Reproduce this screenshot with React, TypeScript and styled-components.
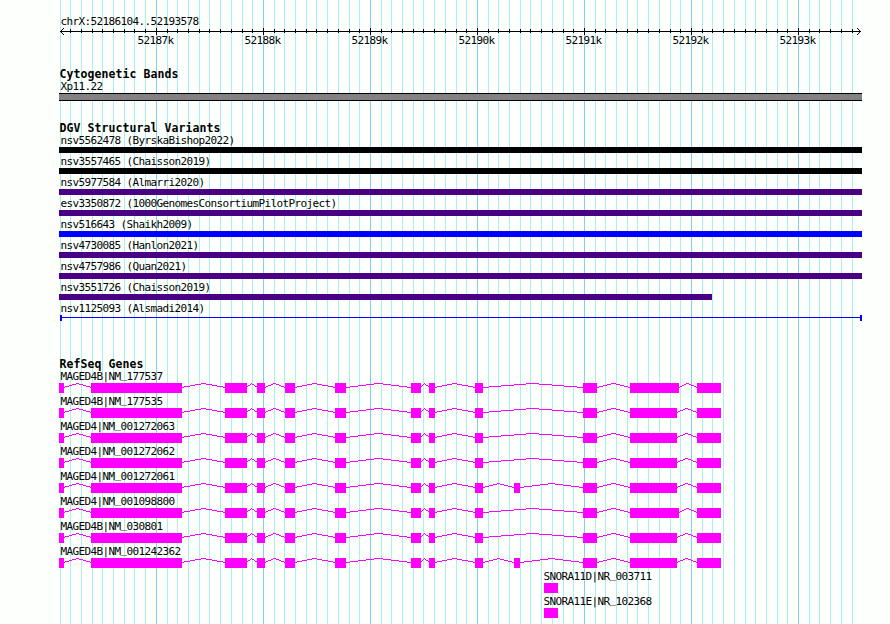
import React from 'react';
import styled, { createGlobalStyle } from 'styled-components';

const START = 52186104;
const END = 52193578;
const LEFT = 60;
const WIDTH = 800;

const toX = (bp: number) => Math.round(LEFT + ((bp - START) * WIDTH) / (END - START + 1));

const GlobalStyle = createGlobalStyle`
  body {
    margin: 0;
    background-color: #fdfffc;
  }
`;

const Browser = styled.main`
  position: relative;
  box-sizing: border-box;
  display: flex;
  flex-direction: column;
  width: 890px;
  height: 624px;
  padding-top: 15px;
  overflow: hidden;
  color: #000;
  font-family: 'DejaVu Sans Mono', monospace;
  font-size: 11px;
  line-height: 13px;
  letter-spacing: -0.622px;
`;

const Backdrop = styled.svg`
  position: absolute;
  top: 0;
  left: 0;
  z-index: -1;
`;

const Ruler = styled.header`
  display: flex;
  flex-direction: column;
  height: 53px;
`;

const Scale = styled.svg`
  display: block;
  flex: none;
`;

const Track = styled.section<{ $gap: number }>`
  display: flex;
  flex-direction: column;
  margin-bottom: ${({ $gap }) => $gap}px;
`;

const TrackTitle = styled.h2`
  height: 12px;
  margin: 0;
  padding-left: 59.5px;
  font-size: 11.5px;
  font-weight: bold;
  line-height: 13px;
  letter-spacing: 0.077px;
`;

const Label = styled.div<{ $x?: number }>`
  height: 13px;
  padding-left: ${({ $x = LEFT }) => $x + 0.5}px;
  white-space: pre;
`;

const Underscore = styled.span`
  position: relative;
  top: -2px;
`;

const Band = styled.div`
  box-sizing: border-box;
  width: 803px;
  height: 8px;
  margin-left: 59px;
  border: solid #000;
  border-width: 1px 0;
  background-color: #848184;
`;

const Feature = styled.div`
  height: 19px;
  margin-bottom: 2px;
`;

const VariantBar = styled.div<{ $color: string; $end: number }>`
  width: ${({ $end }) => $end - 59}px;
  height: 6px;
  margin-left: 59px;
  background-color: ${({ $color }) => $color};
`;

const VariantSpan = styled.div`
  display: flex;
  align-items: center;
  box-sizing: border-box;
  width: 802px;
  height: 6px;
  margin-left: 60px;
  border: solid #0000ff;
  border-width: 0 2px;

  &::before {
    content: '';
    flex: 1;
    height: 1px;
    margin-bottom: 1px;
    background-color: #0000ff;
  }
`;

const Gene = styled.div`
  height: 23px;
  margin-bottom: 2px;
`;

const GeneModel = styled.svg`
  display: block;
`;

const variants = [
  { name: 'nsv5562478 (ByrskaBishop2022)', color: '#000004', end: 862 },
  { name: 'nsv3557465 (Chaisson2019)', color: '#000000', end: 862 },
  { name: 'nsv5977584 (Almarri2020)', color: '#4a0084', end: 862 },
  { name: 'esv3350872 (1000GenomesConsortiumPilotProject)', color: '#4a0084', end: 862 },
  { name: 'nsv516643 (Shaikh2009)', color: '#0000ff', end: 862 },
  { name: 'nsv4730085 (Hanlon2021)', color: '#4a0084', end: 862 },
  { name: 'nsv4757986 (Quan2021)', color: '#4a0084', end: 862 },
  { name: 'nsv3551726 (Chaisson2019)', color: '#4a0084', end: 712 },
];

type Exon = [number, number];

const mageExons = (longExon = false, extraExon = false): Exon[] => [
  [59, 64],
  [91, 182],
  [225, 247],
  [257, 265],
  [285, 295],
  [335, 346],
  [411, 421],
  [429, 435],
  [475, 483],
  ...(extraExon ? ([[514, 520]] as Exon[]) : []),
  [583, 597],
  [630, longExon ? 679 : 677],
  [697, 721],
];

const genes: { name: string; exons: Exon[] }[] = [
  { name: 'MAGED4B|NM_177537', exons: mageExons(true) },
  { name: 'MAGED4B|NM_177535', exons: mageExons() },
  { name: 'MAGED4|NM_001272063', exons: mageExons() },
  { name: 'MAGED4|NM_001272062', exons: mageExons() },
  { name: 'MAGED4|NM_001272061', exons: mageExons(false, true) },
  { name: 'MAGED4|NM_001098800', exons: mageExons(true) },
  { name: 'MAGED4B|NM_030801', exons: mageExons() },
  { name: 'MAGED4B|NM_001242362', exons: mageExons(false, true) },
  { name: 'SNORA11D|NR_003711', exons: [[544, 558]] },
  { name: 'SNORA11E|NR_102368', exons: [[544, 558]] },
];

const ticks: { bp: number; x: number; major: boolean }[] = [];
for (let bp = 52186100; bp <= END; bp += 100) {
  ticks.push({ bp, x: toX(bp), major: bp % 1000 === 0 });
}

// One horizontal run per pixel row, rising to the middle of the intron and back
const intronPath = (from: number, to: number) => {
  const a = from - 1;
  const mid = Math.floor((a + to) / 2);
  const rowAt = (x: number) =>
    x <= mid ? Math.round(4 - (4 * (x - a)) / (mid - a)) : Math.round((4 * (x - mid)) / (to - mid));
  let d = '';
  for (let x = from; x < to; x++) {
    d += `M${x} ${rowAt(x) + 0.5}h1`;
  }
  return d;
};

const Introns = ({ exons }: { exons: Exon[] }) => (
  <path
    d={exons.slice(1).map((exon, i) => intronPath(exons[i][1], exon[0])).join('')}
    stroke="#ff00ff"
    fill="none"
  />
);

const GeneName = ({ name }: { name: string }) => {
  const [prefix, accession] = name.split('_');
  return (
    <>
      {prefix}
      <Underscore>_</Underscore>
      {accession}
    </>
  );
};

const App: React.FC = () => {
  return (
    <>
      <GlobalStyle />
      <Browser>
        <Backdrop width="890" height="624" shapeRendering="crispEdges">
          {ticks.map(({ bp, x, major }) => (
            <rect key={bp} x={x} y="0" width="1" height="624" fill={major ? '#84ceef' : '#adeeef'} />
          ))}
        </Backdrop>

        <Ruler>
          <Label>chrX:52186104..52193578</Label>
          <Scale width="890" height="20" shapeRendering="crispEdges">
            <path d="M60 3.5H861" stroke="#000" />
            <path
              d="M61 2h1v1h-1zM62 1h1v1h-1zM63 0h1v1h-1zM61 4h1v1h-1zM62 5h1v1h-1zM63 6h1v1h-1zM859 2h1v1h-1zM858 1h1v1h-1zM857 0h1v1h-1zM859 4h1v1h-1zM858 5h1v1h-1zM857 6h1v1h-1z"
            />
            {ticks.slice(1).map(({ bp, x, major }) => (
              <rect key={bp} x={x} y={major ? 0 : 1} width="1" height={major ? 7 : 4} />
            ))}
            {ticks
              .filter(({ major }) => major)
              .map(({ bp, x }) => (
                <text key={bp} x={x - 18.5} y="16">
                  {bp / 1000}k
                </text>
              ))}
          </Scale>
        </Ruler>

        <Track $gap={21}>
          <TrackTitle>Cytogenetic Bands</TrackTitle>
          <Label>Xp11.22</Label>
          <Band />
        </Track>

        <Track $gap={35}>
          <TrackTitle>DGV Structural Variants</TrackTitle>
          {variants.map(({ name, color, end }) => (
            <Feature key={name}>
              <Label>{name}</Label>
              <VariantBar $color={color} $end={end} />
            </Feature>
          ))}
          <Feature>
            <Label>nsv1125093 (Alsmadi2014)</Label>
            <VariantSpan />
          </Feature>
        </Track>

        <Track $gap={0}>
          <TrackTitle>RefSeq Genes</TrackTitle>
          {genes.map(({ name, exons }) => (
            <Gene key={name}>
              <Label $x={exons[0][0] === 59 ? 60 : 543}>
                <GeneName name={name} />
              </Label>
              <GeneModel width="890" height="10" shapeRendering="crispEdges">
                <Introns exons={exons} />
                {exons.map(([from, to]) => (
                  <rect key={from} x={from} y="0" width={to - from} height="10" fill="#ff00ff" />
                ))}
              </GeneModel>
            </Gene>
          ))}
        </Track>
      </Browser>
    </>
  );
};

export default App;
